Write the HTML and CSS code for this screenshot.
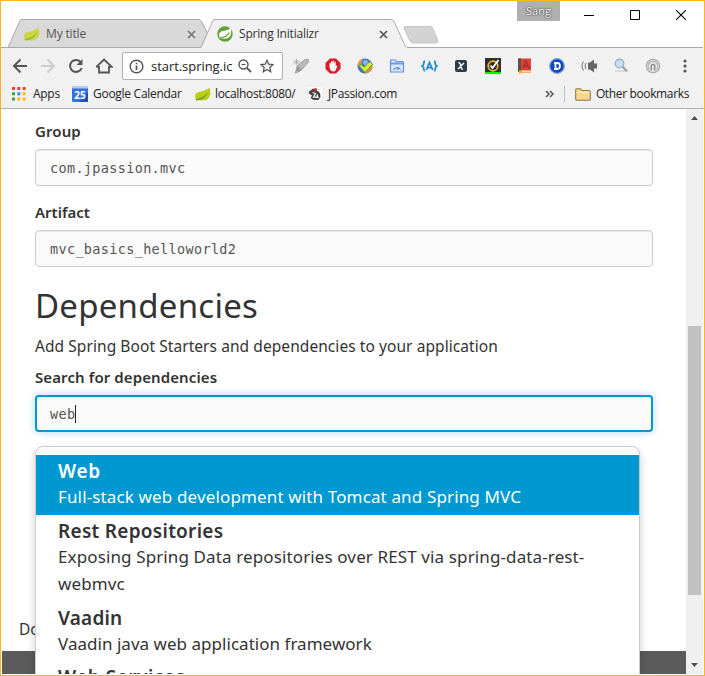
FILE: index.html
```
<!DOCTYPE html>
<html lang="en">
<head>
<meta charset="utf-8">
<title>Spring Initializr</title>
<link rel="stylesheet" href="styles.css">
</head>
<body>
<div class="window">
  <header class="tabstrip">
    <svg class="tab-shapes" width="702" height="30" viewBox="1 18 702 30">
      <path d="M8 47.5 20 20.5Q20.700 19.500 22 19.500H199Q200.500 19.500 201.500 21.500L208 34 202 47.500Z" fill="#d9d9d9" stroke="#aaa"/>
      <path d="M404.500 26.500H430Q432 26.500 433 28.500L438 41Q438.300 43 436 43H413Q411 43 410 41L404 28.500Z" fill="#d3d3d3" stroke="#bcbcbc" stroke-width=".8"/>
      <path d="M0 47.500H201L213 20.500Q213.700 19.500 215 19.500H391.500Q393 19.500 394 21.500L405 45.500Q406 47.500 408 47.500H704V50H0Z" fill="#f1f1f1"/>
      <path d="M0 47.500H201L213 20.500Q213.700 19.500 215 19.500H391.500Q393 19.500 394 21.500L405 45.500Q406 47.500 408 47.500H704" fill="none" stroke="#a9a9a9"/>
    </svg>
    <div class="tab tab-first">
      <svg width="17" height="16" viewBox="0 0 17 16"><path d="M1 10.500C.5 6 5 6.500 10 4.500 12.500 3.600 14 3 15.500 1.500 17 7 16.500 11 13 13.500 9 15.500 4.500 14 2 13.200Z" fill="#cad544"/><path d="M1 13.500C6 12.500 11 10.500 14.500 5.500 12 11 8 14 2.500 14.500Z" fill="#8ebb40"/></svg>
      <span class="tab-title t-my">My title</span>
      <svg class="close" width="9" height="9" viewBox="0 0 9 9"><path d="M1 1 8 8M8 1 1 8" stroke="#777" stroke-width="1.700"/></svg>
    </div>
    <div class="tab tab-active">
      <svg width="16" height="16" viewBox="0 0 16 16"><circle cx="8" cy="8" r="7.700" fill="#5fa134"/><path d="M2.300 10.500C1.500 5.500 5 5 8.500 4.500 11 4.100 12.500 3.200 13.300 1.500 15 6 14.300 10.500 11 12 8.500 13.200 5.500 12.500 3 12.300Z" fill="#fff"/><path d="M3 12C7 11.500 10.500 10 12.500 6.500" fill="none" stroke="#5fa134" stroke-width="1.200"/></svg>
      <span class="tab-title t-spring">Spring Initializr</span>
      <svg class="close" width="9" height="9" viewBox="0 0 9 9"><path d="M1 1 8 8M8 1 1 8" stroke="#555" stroke-width="1.700"/></svg>
    </div>
    <div class="profile">Sang</div>
    <div class="controls">
      <svg width="10" height="10"><path d="M0 5.500H10" stroke="#000"/></svg>
      <svg width="10" height="10"><path d="M.5.5H9.500V9.500H.5Z" fill="none" stroke="#000"/></svg>
      <svg width="10" height="10"><path d="M0 0 10 10M10 0 0 10" stroke="#000" stroke-width="1.100"/></svg>
    </div>
  </header>

  <nav class="toolbar">
    <div class="nav-buttons">
      <svg width="16" height="16" viewBox="0 0 16 16"><path d="M15 8H2.500M8.500 1.500 2 8 8.500 14.500" fill="none" stroke="#555" stroke-width="2"/></svg>
      <svg width="16" height="16" viewBox="0 0 16 16"><path d="M1 8H13.500M7.500 1.500 14 8 7.500 14.500" fill="none" stroke="#ccc" stroke-width="2"/></svg>
      <svg width="16" height="16" viewBox="0 0 16 16"><path d="M12.800 4.200A6 6 0 1 0 13.700 10" fill="none" stroke="#555" stroke-width="2"/><path d="M14.500 1V7H8.500Z" fill="#555"/></svg>
      <svg class="home" width="18" height="16" viewBox="0 0 18 16"><path d="M4 8V14.500H14V8M1.300 8.800 9 1.500 16.700 8.800H13.500M4.500 8.800H1.300" fill="none" stroke="#555" stroke-width="1.800"/></svg>
    </div>
    <div class="omnibox">
      <svg width="15" height="15" viewBox="0 0 15 15"><circle cx="7.500" cy="7.500" r="6.300" fill="none" stroke="#555" stroke-width="1.400"/><path d="M7.500 6.500V11M7.500 3.700V5.300" stroke="#555" stroke-width="1.700"/></svg>
      <span class="url">start.spring.ic</span>
      <svg width="14" height="14" viewBox="0 0 14 14"><circle cx="5.500" cy="5.500" r="4.500" fill="none" stroke="#555" stroke-width="1.400"/><path d="M3.500 5.500H7.500" stroke="#555"/><path d="M8.800 8.800 13 13" stroke="#555" stroke-width="1.800"/></svg>
      <svg class="star" width="14" height="14" viewBox="0 0 14 14"><path d="M7 1.300 8.700 5.200 13 5.600 9.800 8.400 10.700 12.700 7 10.400 3.300 12.700 4.200 8.400 1 5.600 5.300 5.200Z" fill="none" stroke="#555" stroke-width="1.300"/></svg>
    </div>
    <div class="extensions">
      <svg width="16" height="16" viewBox="0 0 16 16"><path d="M4.500 7.500 12 1.500Q14 .5 15.700 2L15 4.500 9 11.500 5 14 2 15 3 12.500Z" fill="#b8b8b8" stroke="#959595" stroke-width=".8"/><path d="M4.500 7.500 8.500 11.500 5 14 3 12.500Z" fill="#999"/><path d="M0 4H7M3.500 .5V7.500M1.200 1.700 5.800 6.300M5.800 1.700 1.200 6.300" stroke="#aaa" stroke-width=".8"/></svg>
      <svg width="16" height="16" viewBox="0 0 16 16"><path d="M5 .5H11L15.500 5V11L11 15.500H5L.5 11V5Z" fill="#dc1e24"/><path d="M4.500 8V5.500Q5.200 4.500 5.700 5.500V7.500L6 3.500Q6.700 2.500 7.200 3.500V7L7.700 3Q8.500 2 9 3V7L9.500 4Q10.200 3 10.700 4V8L11.800 7.500Q12.500 7.500 12.200 8.500L10.500 12.500Q9 14 6.500 13 5 12 4.500 9Z" fill="#fff"/></svg>
      <svg width="16" height="16" viewBox="0 0 16 16"><circle cx="8" cy="8" r="7.500" fill="#3876c9"/><path d="M.5 7Q2 1.500 6 .7L4 7.500 7 9 13 3 15.500 7Q16 14 9 15.500Z" fill="#e6903d"/><circle cx="8.500" cy="4.500" r="2.500" fill="#84b8eb"/><path d="M2 7.500 4.500 6.500 7 9 13 3.500 15.500 6.500 8 14.500Z" fill="#d2ed37" stroke="#4d8b2c" stroke-width=".8"/></svg>
      <svg width="16" height="16" viewBox="0 0 16 16"><path d="M1.500 3Q1.500 2 2.500 2H6.500L7.500 3.500H13.500Q14.500 3.500 14.500 4.500V14H1.500Z" fill="#dce8fb" stroke="#5b91e6" stroke-width="1.200"/><path d="M2 5.500H14" stroke="#6a9bea" stroke-width="2"/><path d="M4.500 12A3.800 3.800 0 0 1 11.500 12M8 12 10 9.500" stroke="#3a72ce" fill="none"/></svg>
      <svg width="17" height="16" viewBox="0 0 17 16"><path d="M4 3.200Q2.800 3.200 2.800 5 2.800 7.500 1 8 2.800 8.500 2.800 11 2.800 12.800 4 12.800M13 3.200Q14.200 3.200 14.200 5 14.200 7.500 16 8 14.200 8.500 14.200 11 14.200 12.800 13 12.800M5.300 12 8.500 4.500 11.700 12M6.500 9.700H10.500" fill="none" stroke="#248ccb" stroke-width="1.800"/></svg>
      <svg width="16" height="16" viewBox="0 0 16 16"><rect x="2" y="2" width="12" height="12" rx="2" fill="#2c3c48"/><path d="M5.500 4.800Q6.800 4.500 7.300 6L8.500 10.500Q8.800 11.300 10 11M11 5 5 11" fill="none" stroke="#fff" stroke-width="1.400"/></svg>
      <svg width="16" height="16" viewBox="0 0 16 16"><path d="M0 0H16V14H0Z" fill="#303030"/><path d="M0 14H16V16H0Z" fill="#0be80b"/><circle cx="8" cy="8" r="4.800" fill="none" stroke="#f0b52f" stroke-width="1.700"/><path d="M5.500 7.500 7.500 10 13.500 2" fill="none" stroke="#fff" stroke-width="1.800"/></svg>
      <svg width="16" height="16" viewBox="0 0 16 16"><path d="M1 .5H14V12.500H1Z" fill="#db4137"/><path d="M1 .5H4V14H1Z" fill="#555"/><path d="M2 13.500H14V15H2Z" fill="#e8bc67"/><path d="M2 12.500H5V16L3.500 15 2 16Z" fill="#ffb21d"/><path d="M6 10.500 9 3 12 10.500M7 8H11" fill="none" stroke="#ab2e2a" stroke-width="1.500"/></svg>
      <svg width="16" height="16" viewBox="0 0 16 16"><circle cx="8" cy="8" r="7.300" fill="#1546bd" stroke="#74a2e9" stroke-width="1.200"/><path d="M5 5H8.200Q11 5.200 11 8T8.200 11H5M6.500 5V11" fill="none" stroke="#fff" stroke-width="1.800"/></svg>
      <svg width="16" height="16" viewBox="0 0 16 16"><path d="M7 4.500H9L13 1.500V14.500L9 11.500H7Z" fill="#666"/><path d="M13 5.500H16V10.500H13Z" fill="#666"/><path d="M5 5Q3.400 8 5 11M2.500 3.500Q-.3 8 2.500 12.500" fill="none" stroke="#888" stroke-width="1.200"/></svg>
      <svg width="16" height="16" viewBox="0 0 16 16"><path d="M2 13H12" stroke="#ddd" stroke-width="2"/><circle cx="6.500" cy="5.500" r="4.300" fill="#c5e0f8" stroke="#9bb4d0" stroke-width="1.500"/><path d="M9.500 8.500 14 13.500" stroke="#a5a5a8" stroke-width="2.500"/></svg>
      <svg width="16" height="16" viewBox="0 0 16 16"><circle cx="8" cy="8" r="6.700" fill="#e6e6e6" stroke="#aaa" stroke-width="1.200"/><path d="M4.500 11.500A4.800 4.800 0 1 1 11.500 11.500" fill="none" stroke="#b0b0b0" stroke-width="1.200"/><path d="M6.300 12.500V8.300A1.700 1.700 0 0 1 9.700 8.300V12.500" fill="none" stroke="#909090" stroke-width="1.500"/></svg>
      <svg class="menu" width="4" height="14" viewBox="0 0 4 14"><circle cx="2" cy="2" r="1.600" fill="#555"/><circle cx="2" cy="7" r="1.600" fill="#555"/><circle cx="2" cy="12" r="1.600" fill="#555"/></svg>
    </div>
  </nav>

  <nav class="bookmarks">
    <svg width="14" height="14" viewBox="0 0 14 14"><path d="M0 0H3V3H0ZM5.300 0H8.300V3H5.300ZM10.600 0H13.600V3H10.600Z" fill="#e84336"/><path d="M0 5.300H3V8.300H0ZM0 10.600H3V13.600H0Z" fill="#32a350"/><path d="M5.300 5.300H8.300V8.300H5.300Z" fill="#3d84f5"/><path d="M10.600 5.300H13.600V8.300H10.600ZM5.300 10.600H8.300V13.600H5.300ZM10.600 10.600H13.600V13.600H10.600Z" fill="#fbb90c"/></svg>
    <span class="bm bm-apps">Apps</span>
    <svg width="16" height="16" viewBox="0 0 16 16"><rect width="16" height="16" rx="1" fill="#3970df"/><path d="M0 0H16V2.500H0Z" fill="#b9c7e5"/><path d="M8 15.500 16 6V16H8Z" fill="#2450b4"/><text class="cal" x="8" y="13" text-anchor="middle">25</text></svg>
    <span class="bm bm-cal">Google Calendar</span>
    <svg width="17" height="16" viewBox="0 0 17 16"><path d="M1 10.500C.5 6 5 6.500 10 4.500 12.500 3.600 14 3 15.500 1.500 17 7 16.500 11 13 13.500 9 15.500 4.500 14 2 13.200Z" fill="#bdcd16"/><path d="M1 13.500C6 12.500 11 10.500 14.500 5.500 12 11 8 14 2.500 14.500Z" fill="#719f22"/></svg>
    <span class="bm bm-local">localhost:8080/</span>
    <svg width="16" height="16" viewBox="0 0 16 16"><rect x="1" y="1" width="14" height="14" fill="#fafafa"/><path d="M1.500 6 6 2.500 9.500 4 13 7 13.500 11 11.500 14H6.500L3.500 12 5 9.500 2.500 8Z" fill="#444"/><path d="M5.500 6.500 8.500 7.500 6.500 11 11 11.500 10 8.500" fill="none" stroke="#f4f4f4" stroke-width="1.300"/><circle cx="8.500" cy="3.800" r="1.700" fill="#c8372c"/></svg>
    <span class="bm bm-jp">JPassion.com</span>
    <div class="other">
      <svg width="9" height="8" viewBox="0 0 9 8"><path d="M1 1 4 4 1 7M5 1 8 4 5 7" fill="none" stroke="#555" stroke-width="1.500"/></svg>
      <i class="divider"></i>
      <svg width="16" height="13" viewBox="0 0 16 13"><path d="M.7 11V1.700Q.7.700 1.700.7H5.500L7 2.500H14Q15.300 2.500 15.300 3.700V11Q15.300 12.300 14 12.300H2Q.7 12.300.7 11Z" fill="#fcd68b" stroke="#8f7447" stroke-width="1.100"/><path d="M1.500 4.500H14.500" stroke="#fff0ca"/></svg>
      <span class="bm bm-other">Other bookmarks</span>
    </div>
  </nav>

  <div class="viewport">
    <main class="page">
      <form class="form">
        <label class="label l-group">Group</label>
        <div class="input">com.jpassion.mvc</div>
        <label class="label l-artifact">Artifact</label>
        <div class="input">mvc_basics_helloworld2</div>
        <h2>Dependencies</h2>
        <p class="lead">Add Spring Boot Starters and dependencies to your application</p>
        <label class="label l-search">Search for dependencies</label>
        <div class="search">
          <div class="input focused">web<i class="caret"></i></div>
          <div class="suggestions">
            <div class="item selected"><b class="n-web">Web</b><p class="d-web">Full-stack web development with Tomcat and Spring MVC</p></div>
            <div class="item"><b class="n-rest">Rest Repositories</b><p class="d-rest">Exposing Spring Data repositories over REST via spring-data-rest-<br>webmvc</p></div>
            <div class="item"><b class="n-vaadin">Vaadin</b><p>Vaadin java web application framework</p></div>
            <div class="item"><b class="n-ws">Web Services</b></div>
          </div>
        </div>
      </form>
      <p class="hint">Do</p>
      <footer class="footer"></footer>
    </main>
    <div class="scrollbar">
      <svg width="7" height="4"><path d="M0 4 3.500 0 7 4Z" fill="#505050"/></svg>
      <div class="track"><div class="thumb"></div></div>
      <svg width="7" height="4"><path d="M0 0 3.500 4 7 0Z" fill="#505050"/></svg>
    </div>
  </div>
</div>
</body>
</html>
```
FILE: styles.css
```
* { box-sizing: border-box; }
body { margin: 0; font-family: "Noto Sans", sans-serif; color: #333; overflow: hidden; }
p, h2 { margin: 0; }
svg { display: block; flex: none; }
.window { width: 705px; height: 676px; border: 1px solid #fdb913; background: #fff; display: flex; flex-direction: column; overflow: hidden; }

.tabstrip { position: relative; height: 47px; display: flex; flex: none; font: 12px/16px "Open Sans", sans-serif; }
.tab-shapes { position: absolute; left: 0; bottom: 0; }
.tab { position: relative; display: flex; align-items: center; padding-top: 19px; height: 47px; white-space: nowrap; }
.tab-first { width: 194px; margin-left: 22px; color: #555; }
.tab-active { width: 171px; color: #333; }
.tab-title { margin-left: 6px; }
.t-my { letter-spacing: -.15px; }
.t-spring { letter-spacing: -.2px; }
.close { margin-left: auto; }
.tab-first .close { margin-right: 21px; }
.profile { position: relative; width: 43px; height: 20px; margin-left: 129px; background: #b0b0b0; color: #fff; text-align: center; font-size: 11px; line-height: 20px; text-shadow: 0 0 2px #333, 0 0 1px #333; }
.controls { display: flex; gap: 36px; margin: 9px 0 0 24px; }

.toolbar { height: 36px; flex: none; background: #f1f1f1; display: flex; align-items: center; padding-left: 11px; }
.nav-buttons { display: flex; gap: 12px; width: 110px; }
.home { margin-left: -1px; }
.omnibox { width: 161px; height: 28px; border: 1px solid #b0b0b0; border-radius: 2px; background: #fff; display: flex; align-items: center; padding-left: 6px; }
.url { font: 13px/18px "Open Sans", sans-serif; color: #222; width: 87px; margin-left: 7px; letter-spacing: -.05px; white-space: nowrap; }
.star { margin-left: 8px; }
.extensions { display: flex; gap: 16px; align-items: center; padding-left: 10px; }
.extensions svg:nth-child(5) { margin-right: -1px; }
.menu { margin-left: 6px; }

.bookmarks { height: 25px; flex: none; background: #f1f1f1; border-bottom: 1px solid #b0b0b0; display: flex; align-items: center; padding: 0 15px 4px 11px; font: 12px/18px "Open Sans", sans-serif; color: #222; white-space: nowrap; }
.bm { letter-spacing: -.28px; }
.bm-apps { width: 39px; margin-left: 7px; }
.bm-cal { width: 101px; margin-left: 5px; }
.bm-local { width: 92px; margin-left: 4px; letter-spacing: -.33px; }
.bm-jp { margin-left: 5px; letter-spacing: -.36px; }
.cal { font: bold 10px "Open Sans", sans-serif; fill: #fff; }
.other { display: flex; align-items: center; margin-left: auto; }
.divider { width: 1px; height: 16px; background: #c0c0c0; margin: 0 10px; }
.bm-other { margin-left: 5px; letter-spacing: -.36px; }

.viewport { display: flex; height: 565px; flex: none; padding-left: 1px; margin-right: 1px; }
.page { position: relative; width: 684px; overflow: hidden; display: flex; flex-direction: column; }
.form { padding: 11px 33px 0; }
.label { display: block; font-size: 15px; font-weight: 600; line-height: 22px; margin-bottom: 7px; }
.l-group, .l-search { letter-spacing: .1px; }
.input { height: 37px; border: 1px solid #ccc; border-radius: 4px; background: #fafafa; box-shadow: inset 0 1px 1px rgba(0,0,0,.075); padding: 0 14px; margin-bottom: 15px; display: flex; align-items: center; font: 13.5px/20px "DejaVu Sans Mono", monospace; letter-spacing: .34px; color: #555; }
h2 { font-size: 33px; font-weight: 400; line-height: 44px; margin: 17px 0 7px; letter-spacing: .25px; }
.lead { font-size: 15.5px; line-height: 22px; letter-spacing: .07px; margin-bottom: 9px; }
.search { position: relative; }
.focused { border: 2px solid #0098d0; padding: 0 13px; margin: 0; box-shadow: 0 0 8px rgba(50,150,220,.4); }
.caret { width: 1px; height: 18px; background: #222; }
.suggestions { position: absolute; top: 51px; left: 0; width: 605px; height: 260px; padding-top: 8px; border: 1px solid #ccc; border-radius: 8px; background: #fff; box-shadow: 0 5px 10px rgba(0,0,0,.2); }
.item { padding: 4px 22px 5px; font-size: 17px; line-height: 27px; letter-spacing: .03px; white-space: nowrap; }
.item b { display: block; font-size: 19px; font-weight: 600; line-height: 24px; letter-spacing: .2px; }
.selected { background: #0098d0; color: #fff; }
.item .n-web { letter-spacing: .7px; }
.item .n-rest { letter-spacing: .28px; }
.item .n-ws { letter-spacing: .5px; line-height: 22px; }
.d-web { letter-spacing: .14px; }
.d-rest { letter-spacing: .12px; }
.hint { font-size: 15.5px; line-height: 22px; margin: auto 0 11px 17px; }
.footer { height: 23px; flex: none; background: #5b5b5b; }
.scrollbar { width: 17px; background: #f0f0f0; display: flex; flex-direction: column; align-items: center; padding: 7px 0; }
.track { flex: 1; width: 13px; padding-top: 206px; }
.thumb { height: 269px; background: #c1c1c1; }
```
